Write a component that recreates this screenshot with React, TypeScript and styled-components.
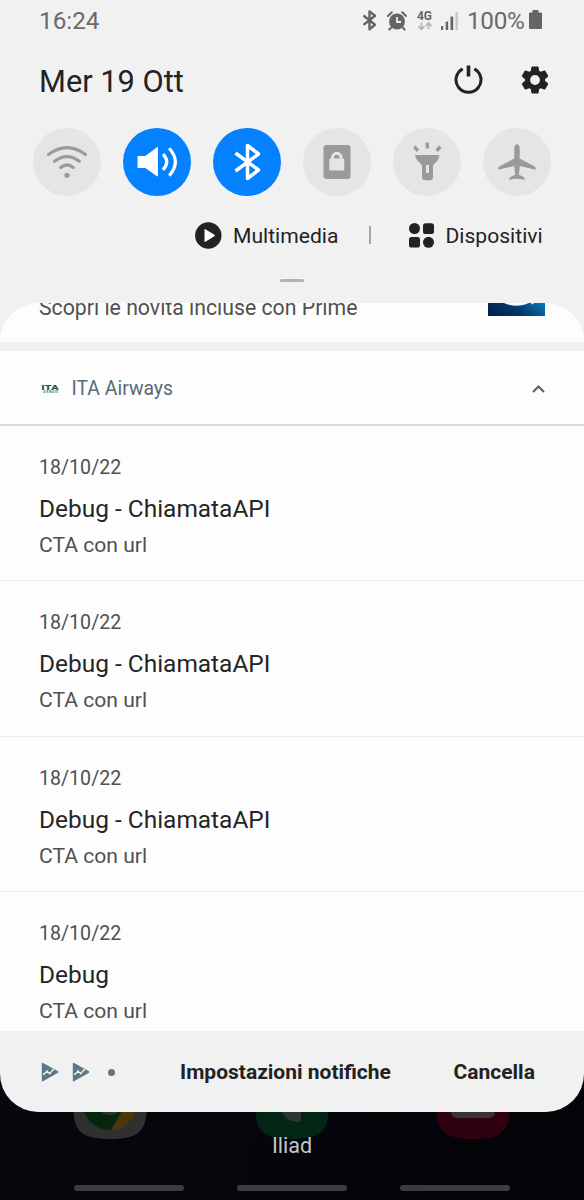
import React from 'react';
import styled, { createGlobalStyle } from 'styled-components';

const GlobalStyle = createGlobalStyle`
  body {
    margin: 0;
    background: #05060a;
    font-family: Roboto, "Liberation Sans", sans-serif;
  }
  * { box-sizing: border-box; }
  svg { display: block; flex: none; }
`;

const Phone = styled.div`
  position: relative;
  width: 584px;
  height: 1200px;
  overflow: hidden;
  background: linear-gradient(100deg, #080a10, #04050a 70%, #030407);
`;

const Shade = styled.main`
  position: relative;
  display: flex;
  flex-direction: column;
  height: 1112px;
  background: #f1f1f1;
  border-radius: 0 0 38px 38px;
  overflow: hidden;
`;

const StatusBar = styled.header`
  display: flex;
  align-items: center;
  height: 41px;
  padding: 0 42px 0 39px;
  color: #6a6a6a;
  font-size: 24.3px;
  line-height: 41px;
`;

const Clock = styled.span`
  flex: 1;
`;

const StatusIcons = styled.div`
  display: flex;
  align-items: center;
`;

const Percent = styled.span`
  margin: 0 2px 0 9px;
  width: 60px;
  letter-spacing: -0.3px;
  white-space: nowrap;
`;

const DateRow = styled.div`
  display: flex;
  align-items: center;
  height: 79px;
  padding: 0 34px 0 39px;
`;

const DateText = styled.h1`
  flex: 1;
  margin: 0;
  color: #222;
  font-size: 30.8px;
  font-weight: 400;
  line-height: 40px;
  padding-top: 2px;
`;

const HeaderActions = styled.div`
  display: flex;
  gap: 37px;
  padding-bottom: 2px;
`;

const Toggles = styled.div`
  display: flex;
  gap: 22px;
  padding: 8px 0 0 32.5px;
  height: 76px;
`;

const Toggle = styled.button<{ $on?: boolean }>`
  display: flex;
  flex: none;
  padding: 0;
  border: 0;
  width: 68px;
  height: 68px;
  border-radius: 50%;
  background: ${(p) => (p.$on ? '#0381fe' : '#e5e5e5')};
  color: ${(p) => (p.$on ? '#fff' : '#9a9a9a')};
`;

const MediaRow = styled.div`
  display: flex;
  align-items: center;
  height: 80px;
  padding: 0 0 2px 195px;
  color: #222;
  font-size: 21.1px;
`;

const MediaButton = styled.div<{ $gap: number; $width: number }>`
  display: flex;
  align-items: center;
  gap: ${(p) => p.$gap}px;
  width: ${(p) => p.$width}px;
  line-height: 24px;
  white-space: nowrap;
`;

const MediaLabel = styled.span`
  padding-top: 2px;
`;

const MediaDivider = styled.i`
  width: 1.5px;
  height: 18px;
  margin: 0 38px 0 31px;
  background: #a5a5a5;
`;

const Handle = styled.div`
  width: 24px;
  height: 3px;
  margin: 3px auto 21px;
  border-radius: 2px;
  background: #b3b3b3;
`;

const Notifications = styled.section`
  height: 728px;
  overflow: hidden;
  border-radius: 38px 38px 0 0;
  background: #f1f1f1;
`;

const PromoCard = styled.div`
  display: flex;
  justify-content: space-between;
  height: 39px;
  margin-bottom: 9px;
  padding: 0 39px;
  background: #fdfdfd;
  overflow: hidden;
`;

const PromoText = styled.span`
  margin-top: -8px;
  color: #505050;
  font-size: 21.25px;
  line-height: 26px;
`;

const PromoThumb = styled.svg`
  width: 57px;
  height: 13px;
`;

const AppHeader = styled.div`
  display: flex;
  align-items: center;
  height: 75px;
  padding: 2px 39px 0 40px;
  background: #fdfdfd;
  border-bottom: 2px solid #d9d9d9;
`;

const AppName = styled.span`
  flex: 1;
  padding: 1px 0 0 11.5px;
  color: #566b78;
  font-size: 19.4px;
  line-height: 24px;
`;

const Item = styled.article`
  height: 155.3px;
  padding: 30px 39px 0;
  background: #fdfdfd;
  border-bottom: 1.5px solid #ececec;
`;

const ItemDate = styled.div`
  color: #505050;
  font-size: 19.6px;
  line-height: 24px;
`;

const ItemTitle = styled.div`
  margin-top: 14px;
  color: #252525;
  font-size: 24.45px;
  line-height: 30px;
`;

const ItemBody = styled.div`
  margin-top: 8px;
  color: #505050;
  font-size: 21.1px;
  line-height: 26px;
`;

const Footer = styled.footer`
  display: flex;
  align-items: center;
  height: 81px;
  padding: 1px 0 0 41px;
  color: #222;
  font-size: 21px;
  font-weight: 700;
`;

const FooterIcons = styled.div`
  display: flex;
  align-items: center;
  width: 139px;
`;

const MoreDot = styled.i`
  width: 7px;
  height: 7px;
  margin-left: 18px;
  border-radius: 50%;
  background: #5f7683;
`;

const FooterButton = styled.span<{ $width: number }>`
  width: ${(p) => p.$width}px;
  white-space: nowrap;
  line-height: 24px;
`;

const Dock = styled.div`
  position: absolute;
  top: 1065px;
  left: 73px;
  display: flex;
  gap: 107.5px;
`;

const Carrier = styled.div`
  position: relative;
  padding-top: 20px;
  height: 73px;
  color: #c6c6c8;
  font-size: 21.5px;
  line-height: 28px;
  text-align: center;
`;

const NavBar = styled.nav`
  display: flex;
  gap: 53px;
  padding-left: 74px;
`;

const NavPill = styled.i`
  width: 110px;
  height: 6px;
  border-radius: 3px;
  background: #3c3c3f;
`;

const PlayConsole = ({ gap = 0 }: { gap?: number }) => (
  <svg width="18" height="20" viewBox="0 0 18 20" style={{ marginLeft: gap }}>
    <path d="M1.600 .8 17 9.200q1 .8 0 1.600L1.600 19.400q-.8.300-.8-.8V1.400Q.8.500 1.600 .8Z" fill="#5f7683" />
    <path d="m3 12 3-2.800 2.700 2.200 3.300-3.400" fill="none" stroke="#f1f1f1" strokeWidth="1.200" />
    <g fill="#f1f1f1">
      <circle cx="3" cy="12" r="1" />
      <circle cx="6" cy="9.200" r="1" />
      <circle cx="8.700" cy="11.400" r="1" />
      <circle cx="12" cy="8" r="1" />
    </g>
  </svg>
);

const items = [
  { title: 'Debug - ChiamataAPI' },
  { title: 'Debug - ChiamataAPI' },
  { title: 'Debug - ChiamataAPI' },
  { title: 'Debug' },
];

const squircle = 'M37 0C68 0 74 8 74 37S67 74 37 74 0 66 0 37 6 0 37 0Z';

export default function App() {
  return (
    <Phone>
      <GlobalStyle />
      <Dock>
        <svg width="74" height="74">
          <path d={squircle} fill="#303030" />
          <circle cx="37" cy="38" r="27" fill="#4c3708" />
          <path d="M37 38 10 34A27 27 0 0 0 38 65L51 42Z" fill="#04270d" />
          <circle cx="37" cy="37" r="13" fill="#333" />
        </svg>
        <svg width="74" height="74">
          <path d={squircle} fill="#032514" />
          <path d="M26 44C27 51 34 57 44 57Q46 57 46 54V43Z" fill="#303532" />
        </svg>
        <svg width="74" height="74">
          <path d={squircle} fill="#30020f" />
          <rect x="15" y="20" width="44" height="33" rx="6" fill="#393237" />
        </svg>
      </Dock>
      <Shade>
        <StatusBar>
          <Clock>16:24</Clock>
          <StatusIcons>
            <svg width="16" height="21" viewBox="0 0 16 21" fill="none" stroke="#656565" strokeWidth="2.400" strokeLinejoin="round">
              <path d="m1.500 5.500 11.500 9.200-5.500 4.500V1.500l5.500 4.200-11.500 9.200" />
            </svg>
            <svg width="20" height="20" viewBox="0 0 20 20" style={{ marginLeft: 8.500 }}>
              <circle cx="10" cy="10.500" r="8" fill="#656565" />
              <path d="m1 5 3.800-3.700M19 5l-3.800-3.700M4.500 16.200l-2.200 2.300M15.500 16.200l2.200 2.300" stroke="#656565" strokeWidth="2" strokeLinecap="round" />
              <path d="M10 6v5h4" fill="none" stroke="#f1f1f1" strokeWidth="1.800" />
            </svg>
            <svg width="16" height="22" viewBox="0 0 16 22" style={{ marginLeft: 10 }}>
              <text x="0" y="9.500" fontFamily="Roboto" fontWeight="700" fontSize="12" textLength="15" lengthAdjust="spacingAndGlyphs" fill="#656565">4G</text>
              <path d="M4.400 12.800v6M1.400 16.300l3 3 3-3M11.600 19.300v-6M8.600 16l3-3 3 3" fill="none" stroke="#b5b5b5" strokeWidth="1.700" />
            </svg>
            <svg width="17" height="20" viewBox="0 0 17 20" style={{ marginLeft: 8.500 }}>
              <g fill="#656565">
                <rect x="0" y="15" width="2.200" height="4" rx=".5" />
                <rect x="4.700" y="10.500" width="2.500" height="8.500" rx=".5" />
                <rect x="9.500" y="5.500" width="2.700" height="13.500" rx=".5" />
              </g>
              <rect x="14.500" y="1" width="2.300" height="18" rx=".5" fill="#c5c5c5" />
            </svg>
            <Percent>100%</Percent>
            <svg width="13" height="21" viewBox="0 0 13 21">
              <path d="M3.500 0h6v2.500H12q1 0 1 1V18q0 1-1 1H1q-1 0-1-1V3.500q0-1 1-1h2.500Z" fill="#656565" />
            </svg>
          </StatusIcons>
        </StatusBar>

        <DateRow>
          <DateText>Mer 19 Ott</DateText>
          <HeaderActions>
            <svg width="30" height="30" viewBox="0 0 30 30" fill="none" stroke="#222">
              <path d="M9.700 3.800A12.500 12.500 0 1 0 21.300 3.800" strokeWidth="3" />
              <path d="M15.500 .5v11" strokeWidth="3.600" />
            </svg>
            <svg width="30" height="30" viewBox="-15 -15 30 30">
              <g fill="#222">
                <circle r="10" />
                {[0, 60, 120].map((a) => (
                  <path key={a} transform={`rotate(${a})`} d="M-2.800-13.500h5.600q.7 0 .8.700L4.200-9 5.500-7v14L4.200 9l-.6 3.800q-.1.700-.8.700h-5.600q-.7 0-.8-.7L-4.200 9-5.500 7V-7L-4.200-9l.6-3.800q.1-.7.8-.7Z" />
                ))}
              </g>
              <circle r="4.900" fill="#f1f1f1" />
            </svg>
          </HeaderActions>
        </DateRow>

        <Toggles>
          <Toggle aria-label="Wi-Fi">
            <svg width="68" height="68" viewBox="0 0 68 68" fill="none" stroke="currentColor" strokeWidth="3.200" strokeLinecap="round">
              <path d="M15.500 26.500Q34 12.800 52.500 26.500M21.500 33.300Q34 23.800 46.300 33.300M27.700 39.500Q34 34.500 40.200 39.500" />
              <circle cx="34" cy="47.300" r="2.600" fill="currentColor" stroke="none" />
            </svg>
          </Toggle>
          <Toggle $on aria-label="Audio">
            <svg width="68" height="68" viewBox="0 0 68 68" fill="none" stroke="currentColor" strokeWidth="3.200">
              <path d="M15.500 28h6.800L34 19.300q.9-.6.900.5v28q0 1.100-.9.500L22.300 40h-6.800q-1 0-1-1V29q0-1 1-1Z" fill="currentColor" stroke="none" />
              <path d="M40 26.200Q47.500 34 40 41.800M46.200 20.300Q58.500 34 46.200 47.700" />
            </svg>
          </Toggle>
          <Toggle $on aria-label="Bluetooth">
            <svg width="68" height="68" viewBox="0 0 68 68" fill="none" stroke="currentColor" strokeWidth="3.500" strokeLinejoin="round">
              <path d="m22.500 25 23 17-11 8.500V17.500l11 8.500L22.500 43" />
            </svg>
          </Toggle>
          <Toggle aria-label="Rotazione">
            <svg width="68" height="68" viewBox="0 0 68 68">
              <rect x="20.500" y="17" width="27" height="34" rx="3" fill="currentColor" />
              <rect x="26.300" y="30.500" width="15" height="12" rx="1.200" fill="#e5e5e5" />
              <path d="M29.500 32v-2.500a4.300 4.300 0 0 1 8.600 0V32" fill="none" stroke="#e5e5e5" strokeWidth="2.900" />
            </svg>
          </Toggle>
          <Toggle aria-label="Torcia">
            <svg width="68" height="68" viewBox="0 0 68 68">
              <path d="M23 27h22.500q1 0 .8 1c-.5 4-3.500 6-6.300 9.500V49q0 3.300-3.300 3.300h-4.500Q29 52.300 29 49V37.500C26.500 34 23 32 22.200 28q-.2-1 .8-1Z" fill="currentColor" />
              <rect x="33" y="37" width="3" height="8" fill="#e5e5e5" />
              <path d="M34.300 14.500v6M21.300 18.700l3.600 4.200M47.300 18.700l-3.600 4.200" stroke="currentColor" strokeWidth="3.400" />
            </svg>
          </Toggle>
          <Toggle aria-label="Modalità aereo">
            <svg width="68" height="68" viewBox="0 0 68 68">
              <path d="M34 16.200c1.800 0 2.700 2.200 2.700 4.200v10l14 7.500q2 1 2 2.300v1.600L36.900 38l-1 8.500 4.900 2.800q.8.500.8 1.400v1.200q-7.600-2.300-15.200 0v-1.200q0-.9.800-1.400l4.900-2.800-1-8.500-15.800 3.800v-1.600q0-1.300 2-2.300l14-7.500v-10c0-2 .9-4.200 2.700-4.200Z" fill="currentColor" />
            </svg>
          </Toggle>
        </Toggles>

        <MediaRow>
          <MediaButton $gap={11} $width={143}>
            <svg width="27" height="27" viewBox="0 0 27 27">
              <circle cx="13.300" cy="13.500" r="13.200" fill="#222" />
              <path d="M9.500 7.700v11.600q0 1 .9.500l9-5.600q.8-.7 0-1.400l-9-5.600q-.9-.5-.9.500Z" fill="#fff" />
            </svg>
            <MediaLabel>Multimedia</MediaLabel>
          </MediaButton>
          <MediaDivider />
          <MediaButton $gap={11} $width={136}>
            <svg width="26" height="26" viewBox="0 0 26 26" fill="#222">
              <circle cx="5.500" cy="6.500" r="5.500" />
              <rect x="14" y="1.200" width="11" height="10.800" rx="2.600" />
              <rect x="0" y="15" width="11" height="10.600" rx="2.600" />
              <circle cx="19.500" cy="20.300" r="5.500" />
            </svg>
            <MediaLabel>Dispositivi</MediaLabel>
          </MediaButton>
        </MediaRow>
        <Handle />

        <Notifications>
          <PromoCard>
            <PromoText>Scopri le novità incluse con Prime</PromoText>
            <PromoThumb viewBox="0 0 57 13">
              <defs>
                <linearGradient id="prime" x1="0" x2="1" y1=".3" y2="0">
                  <stop offset="0" stopColor="#032350" />
                  <stop offset=".45" stopColor="#063a70" />
                  <stop offset="1" stopColor="#087fb8" />
                </linearGradient>
              </defs>
              <rect width="57" height="13" fill="url(#prime)" />
              <path d="M16 0q13 5.500 25 0ZM43 0h3l-1.500 1.500Z" fill="#fff" />
            </PromoThumb>
          </PromoCard>
          <AppHeader>
            <svg width="20" height="12" viewBox="0 0 20 12" fontFamily="Roboto" fontWeight="900">
              <text x="1.300" y="6.500" fontSize="7" textLength="17.500" lengthAdjust="spacingAndGlyphs" fill="#1d5f49">ITA</text>
              <text x="3" y="10" fontSize="3" textLength="15" lengthAdjust="spacing" fill="#5f9481">AIRWAYS</text>
            </svg>
            <AppName>ITA Airways</AppName>
            <svg width="13" height="8" viewBox="0 0 13 8" fill="none" stroke="#56646c" strokeWidth="2.100">
              <path d="m1 7 5.500-5.500L12 7" />
            </svg>
          </AppHeader>
          {items.map((n, i) => (
            <Item key={i}>
              <ItemDate>18/10/22</ItemDate>
              <ItemTitle>{n.title}</ItemTitle>
              <ItemBody>CTA con url</ItemBody>
            </Item>
          ))}
        </Notifications>

        <Footer>
          <FooterIcons>
            <PlayConsole />
            <PlayConsole gap={13} />
            <MoreDot />
          </FooterIcons>
          <FooterButton $width={273.500}>Impostazioni notifiche</FooterButton>
          <FooterButton $width={90}>Cancella</FooterButton>
        </Footer>
      </Shade>
      <Carrier>Iliad</Carrier>
      <NavBar>
        <NavPill />
        <NavPill />
        <NavPill />
      </NavBar>
    </Phone>
  );
}
